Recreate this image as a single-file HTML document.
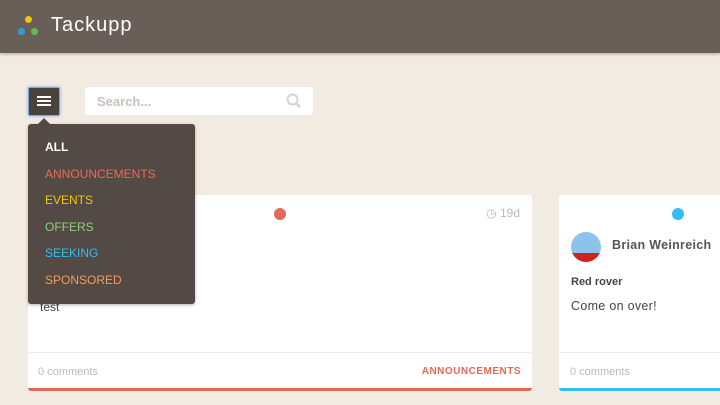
<!DOCTYPE html><html><head><style>
body{margin:0;width:720px;height:405px;background:#f2ebe1;font-family:"Liberation Sans",sans-serif;position:relative;overflow:hidden}
.hdr{position:absolute;left:0;top:0;width:720px;height:53px;background:#6a5f58;box-shadow:0 1px 3px rgba(0,0,0,.3)}
.dot{position:absolute;border-radius:50%;width:7px;height:7px}
.card{position:absolute;background:#fff;border-radius:3px;top:195px;height:193px}
.abs{position:absolute}
</style></head><body>
<div class="hdr">
<div class="dot" style="left:25px;top:16px;background:#f0c800"></div>
<div class="dot" style="left:18px;top:28px;background:#2a9fd8"></div>
<div class="dot" style="left:31px;top:28px;background:#5cc050"></div>
<div class="abs" style="left:51px;top:14px;color:#fff;font-size:20px;letter-spacing:1px">Tackupp</div>
</div>
<div class="abs" style="left:28px;top:87px;width:30px;height:27px;background:#4a423d;border:1px solid #7aa9e0;box-shadow:0 0 3px #7ab0ee;border-radius:2px">
<div class="abs" style="left:8px;top:8px;width:14px;height:2px;background:#fff;box-shadow:0 4px 0 #fff,0 8px 0 #fff"></div></div>
<div class="abs" style="left:85px;top:87px;width:228px;height:28px;background:#fff;border-radius:3px">
<div class="abs" style="left:12px;top:7px;color:#c8c2bc;font-size:13px;font-weight:bold">Search...</div>
<svg class="abs" style="left:201px;top:6px" width="16" height="16"><circle cx="6.5" cy="6.5" r="5" stroke="#d8d4d0" stroke-width="2" fill="none"/><line x1="10" y1="10" x2="14" y2="14" stroke="#d8d4d0" stroke-width="2.5"/></svg></div>
<div class="abs" style="left:183px;top:140px;font-size:13px;font-weight:bold;color:#555">el</div>
<div class="card" style="left:28px;width:504px;border-bottom:3px solid #e06a55">
<div class="abs" style="left:246px;top:13px;width:12px;height:12px;border-radius:50%;background:#e06a5c"></div>
<div class="abs" style="right:12px;top:11px;color:#bbb;font-size:12px">◷ 19d</div>
<div class="abs" style="left:12px;top:105px;font-size:12px;color:#444">test</div>
<div class="abs" style="left:0;right:0;top:157px;border-top:1px solid #f0ebe6"></div>
<div class="abs" style="left:10px;top:171px;font-size:11px;color:#bbb">0 comments</div>
<div class="abs" style="right:11px;top:171px;font-size:10px;font-weight:bold;color:#e06a55;letter-spacing:.5px">ANNOUNCEMENTS</div>
</div>
<div class="card" style="left:559px;width:180px;border-bottom:3px solid #35bcf5">
<div class="abs" style="left:113px;top:13px;width:12px;height:12px;border-radius:50%;background:#35bcf5"></div>
<div class="abs" style="left:12px;top:37px;width:30px;height:30px;border-radius:50%;background:linear-gradient(#8bc3ea 70%,#d02020 70%)"></div>
<div class="abs" style="left:53px;top:43px;font-size:12.5px;font-weight:bold;color:#555;letter-spacing:.3px">Brian Weinreich</div>
<div class="abs" style="left:12px;top:81px;font-size:11px;font-weight:bold;color:#444">Red rover</div>
<div class="abs" style="left:12px;top:104px;font-size:12.5px;color:#444;letter-spacing:.3px">Come on over!</div>
<div class="abs" style="left:0;right:0;top:157px;border-top:1px solid #f0ebe6"></div>
<div class="abs" style="left:11px;top:171px;font-size:11px;color:#bbb">0 comments</div>
</div>
<div class="abs" style="left:37px;top:118px;width:0;height:0;border-left:7px solid transparent;border-right:7px solid transparent;border-bottom:7px solid #544a45"></div>
<div class="abs" style="left:28px;top:124px;width:167px;height:180px;background:#544a45;border-radius:3px;box-shadow:0 1px 3px rgba(0,0,0,.3);font-size:12px;line-height:26.5px">
<div class="abs" style="left:17px;top:10px">
<div style="color:#fff;font-weight:bold">ALL</div>
<div style="color:#e86a5a">ANNOUNCEMENTS</div>
<div style="color:#f0c800">EVENTS</div>
<div style="color:#8ed07a">OFFERS</div>
<div style="color:#35bcf5">SEEKING</div>
<div style="color:#f49a5a">SPONSORED</div>
</div></div>
</body></html>
